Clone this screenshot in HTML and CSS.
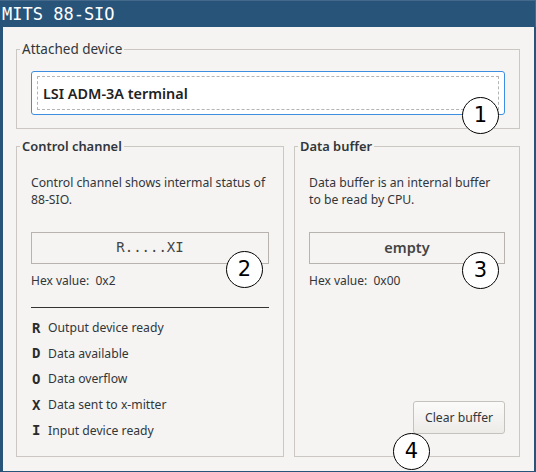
FILE: index.html
```html
<!DOCTYPE html>
<html>
<head>
<meta charset="utf-8">
<link rel="stylesheet" href="styles.css">
</head>
<body>
<div class="window">
  <div class="titlebar">MITS 88-SIO</div>
  <div class="content">
    <fieldset class="group">
      <legend class="group-title">Attached device</legend>
      <div class="group-body attached">
        <div class="device-field"><div class="device-focus">LSI ADM-3A terminal</div></div>
      </div>
    </fieldset>
    <div class="row">
      <fieldset class="group control">
        <legend class="group-title strong">Control channel</legend>
        <div class="group-body">
          <p class="desc">Control channel shows intermal status of 88-SIO.</p>
          <div class="value-box mono">R.....XI</div>
          <div class="hex">Hex value:&nbsp;&nbsp;0x2</div>
          <div class="rule"></div>
          <ul class="legend-list">
            <li><span class="flag">R</span><span>Output device ready</span></li>
            <li><span class="flag">D</span><span>Data available</span></li>
            <li><span class="flag">O</span><span>Data overflow</span></li>
            <li><span class="flag">X</span><span>Data sent to x-mitter</span></li>
            <li><span class="flag">I</span><span>Input device ready</span></li>
          </ul>
        </div>
      </fieldset>
      <fieldset class="group buffer">
        <legend class="group-title strong">Data buffer</legend>
        <div class="group-body buffer-body">
          <p class="desc">Data buffer is an internal buffer<br>to be read by CPU.</p>
          <div class="value-box bold">empty</div>
          <div class="hex">Hex value:&nbsp;&nbsp;0x00</div>
          <div class="spacer"></div>
          <div class="actions"><button class="btn">Clear buffer</button></div>
        </div>
      </fieldset>
    </div>
  </div>
  <div class="callout c1">1</div>
  <div class="callout c2">2</div>
  <div class="callout c3">3</div>
  <div class="callout c4">4</div>
</div>
</body>
</html>
```
FILE: styles.css
```css
* { box-sizing: border-box; }
html, body { margin: 0; padding: 0; }
body { width: 536px; height: 472px; background: #28547a; overflow: hidden; }
.window {
  position: relative;
  width: 536px;
  height: 472px;
  display: flex;
  flex-direction: column;
  background: #28547a;
  font-family: "Noto Sans", sans-serif;
  color: #31363b;
}
.titlebar {
  height: 27px;
  line-height: 26px;
  padding-left: 2px;
  font-family: "DejaVu Sans Mono", monospace;
  font-size: 17px;
  color: #fff;
  border-top: 1px solid #44698b;
  border-right: 1px solid #44698b;
}
.content {
  flex: 1;
  margin: 0 2px 2px 3px;
  background: #f5f4f2;
  padding: 13px 14px 14px 13px;
  display: flex;
  flex-direction: column;
}
.group {
  margin: 0;
  padding: 0;
  border: 1px solid #cbc8c3;
  min-width: 0;
}
.group-title {
  margin-left: 3px;
  padding: 0 2px;
  font-size: 13.5px;
  line-height: 18px;
  color: #31363b;
}
.group-title.strong { font-weight: 600; font-size: 12.9px; }
.group-body { padding: 0 14px 13px 14px; }
.attached { padding-top: 13px; }
.device-field {
  height: 44px;
  border: 1px solid #3d8ee0;
  border-radius: 3px;
  background: #fff;
  padding: 4px 5px;
}
.device-focus {
  height: 100%;
  border: 1px dashed #b4b4b4;
  padding-left: 5px;
  font-weight: 600;
  font-size: 14.4px;
  line-height: 33px;
  color: #222;
}
.row {
  flex: 1;
  display: flex;
  gap: 10px;
  margin-top: 8px;
}
.control { width: 268px; }
.buffer { flex: 1; }
.desc {
  margin: 19px 0 0 0;
  font-size: 12.2px;
  line-height: 17px;
}
.value-box {
  margin-top: 24px;
  height: 32px;
  border: 1px solid #b7b4af;
  text-align: center;
  line-height: 29px;
  color: #444;
}
.mono { font-family: "DejaVu Sans Mono", monospace; font-size: 14px; }
.bold { font-weight: 600; font-size: 14.5px; }
.hex { margin-top: 8px; font-size: 12px; line-height: 17px; }
.rule { margin-top: 18px; height: 1px; background: #333; }
.legend-list { list-style: none; margin: 7px 0 0 0; padding: 0; }
.legend-list li {
  display: flex;
  align-items: center;
  height: 25.6px;
  font-size: 12.2px;
}
.flag {
  width: 17px;
  padding-left: 1px;
  font-family: "DejaVu Sans Mono", monospace;
  font-weight: bold;
  font-size: 14px;
  color: #2a2a2a;
}
.buffer-body { height: calc(100% - 9px); display: flex; flex-direction: column; }
.spacer { flex: 1; }
.actions { display: flex; justify-content: flex-end; }
.btn {
  width: 92px;
  height: 33px;
  border: 1px solid #c4c2be;
  border-radius: 3px;
  background: linear-gradient(#fbfbfa, #ecebe8);
  font-family: "Noto Sans", sans-serif;
  font-size: 12.2px;
  color: #31363b;
  padding: 0;
}
.callout {
  position: absolute;
  width: 37px;
  height: 37px;
  border: 1.5px solid #000;
  border-radius: 50%;
  background: #fff;
  font-family: "DejaVu Sans", sans-serif;
  font-size: 21px;
  line-height: 34px;
  text-align: center;
  color: #000;
}
.c1 { left: 462px; top: 97px; }
.c2 { left: 226px; top: 251px; }
.c3 { left: 462px; top: 252px; }
.c4 { left: 393px; top: 433px; }
```
